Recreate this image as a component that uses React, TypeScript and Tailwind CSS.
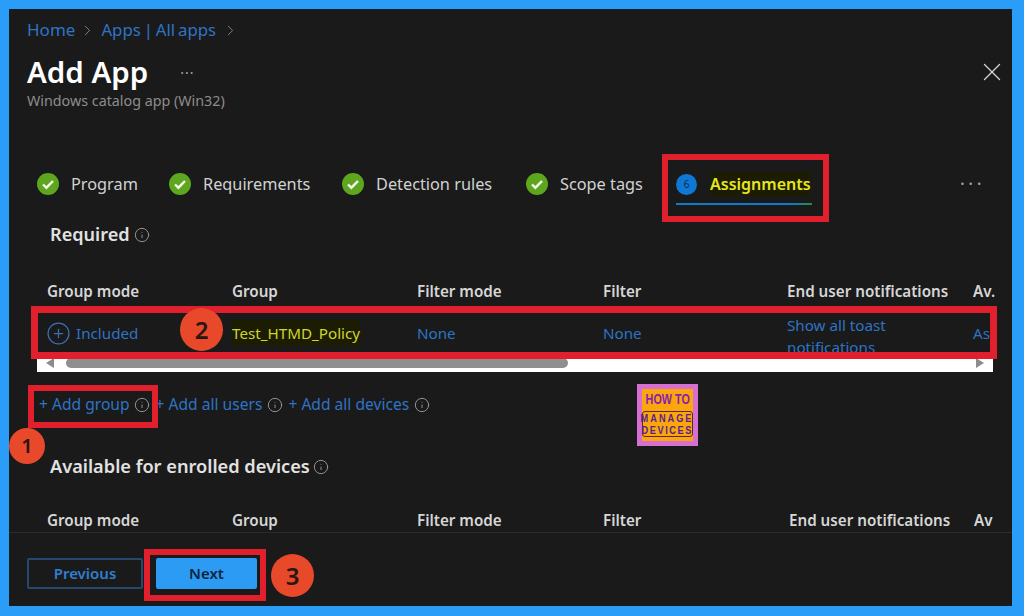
import { ChevronRight, CirclePlus, Info, X } from "lucide-react";

const FONT = "font-['Noto_Sans','Open_Sans',sans-serif]";

const doneTabs = [
  { label: "Program", width: "w-[66px]" },
  { label: "Requirements", width: "w-[107px]" },
  { label: "Detection rules", width: "w-[118px]" },
  { label: "Scope tags", width: "w-[84px]" },
];

function CheckBadge() {
  return (
    <svg viewBox="0 0 22 22" className="h-[22px] w-[22px] shrink-0">
      <circle cx="11" cy="11" r="11" fill="#5ea61e" />
      <path d="M6 11.5l3.4 3.2L16 8" fill="none" stroke="#f4f8ee" strokeWidth="2.4" />
    </svg>
  );
}

function InfoDot({ className = "" }: { className?: string }) {
  return <Info className={`h-[16px] w-[16px] shrink-0 text-[#9a9a9a] ${className}`} strokeWidth={1.4} />;
}

function Callout({ n, className }: { n: number; className: string }) {
  return (
    <div className={`absolute flex items-center justify-center rounded-full bg-[#e8492a] font-semibold text-[#2a1510] ${className}`}>
      {n}
    </div>
  );
}

function HeaderCells({ grid, last }: { grid: string; last: string }) {
  return (
    <div className={`grid h-[32px] shrink-0 items-center pl-[38px] text-[15.2px] font-semibold whitespace-nowrap text-[#d6d6d6] ${grid}`}>
      <span>Group mode</span>
      <span>Group</span>
      <span>Filter mode</span>
      <span>Filter</span>
      <span>End user notifications</span>
      <span>{last}</span>
    </div>
  );
}

export default function App() {
  return (
    <div className={`relative h-[616px] w-[1024px] overflow-hidden bg-[#2a9df8] pt-[9px] pr-[12px] pb-[10px] pl-[9px] ${FONT}`}>
      <div className="flex h-full flex-col bg-[#1a1a1a]">
        <div className="flex min-h-0 flex-1 flex-col overflow-hidden">
          <div className="mt-[10px] flex h-[22px] items-center pl-[18px] text-[17px] text-[#2f73c4]">
            <span>Home</span>
            <ChevronRight className="mr-[5px] ml-[4px] h-[17px] w-[17px] text-[#8a8a8a]" strokeWidth={1.3} />
            <span className="text-[16.8px] [word-spacing:-1.5px]">Apps | All apps</span>
            <ChevronRight className="ml-[6px] h-[17px] w-[17px] text-[#8a8a8a]" strokeWidth={1.3} />
          </div>

          <div className="mt-[11px] flex h-[40px] items-center pr-[5px] pl-[18px]">
            <h1 className="text-[29.5px] font-semibold text-white">Add App</h1>
            <span className="ml-[32px] text-[14px] tracking-[1px] text-[#a8a8a8]">···</span>
            <X className="ml-auto h-[30px] w-[30px] text-[#d0d0d0]" strokeWidth={1.1} />
          </div>
          <div className="flex h-[18px] items-center pl-[18px] text-[14.3px] text-[#8c8c8c]">Windows catalog app (Win32)</div>

          <div className="mt-[50px] flex h-[48px] shrink-0 items-center pl-[28px] text-[16.3px] whitespace-nowrap text-[#d2d2d2]">
            {doneTabs.map((t) => (
              <div key={t.label} className="mr-[32px] flex items-center gap-[12px]">
                <CheckBadge />
                <span className={t.width}>{t.label}</span>
              </div>
            ))}
            <div className="flex h-[45px] w-[136px] shrink-0 flex-col justify-end self-start">
              <div className="flex flex-1 items-center pt-[5px]">
                <div className="flex h-[21px] w-[21px] items-center justify-center rounded-full bg-[#0f78d4] text-[10px] text-[#0c2a4a]">6</div>
                <span className="ml-[13px] bg-[#1c1c02] text-[16px] font-semibold text-[#e6e622]">Assignments</span>
              </div>
              <div className="h-[2px] bg-gradient-to-r from-[#137ac8] from-[85%] to-[#2f8a2c]" />
            </div>
            <span className="mb-[1px] ml-auto pr-[27px] text-[18px] tracking-[3.5px] text-[#a8a8a8]">···</span>
          </div>

          <div className="mt-[16px] flex h-[22px] shrink-0 items-center gap-[4px] pl-[41px] text-[18.1px] font-semibold text-[#e2e2e2]">
            Required <InfoDot />
          </div>

          <div className="mt-[29px] mr-[19px] shrink-0">
            <HeaderCells grid="grid-cols-[185px_185px_186px_184px_186px_1fr]" last="Av." />
            <div className="grid h-[51px] grid-cols-[185px_185px_186px_184px_186px_1fr] items-center overflow-hidden pt-[1px] pl-[38px] text-[15.2px] text-[#2f73c4]">
              <div className="flex items-center gap-[5px]">
                <CirclePlus className="ml-[-1px] h-[25px] w-[25px] text-[#3a6fb4]" strokeWidth={1.2} />
                Included
              </div>
              <div>
                <span className="bg-[#1c1c02] py-[3px] text-[#cfd62c]">Test_HTMD_Policy</span>
              </div>
              <span>None</span>
              <span>None</span>
              <div className="mt-[6px] self-start leading-[22px]">
                Show all toast
                <br />
                notifications
              </div>
              <span>As</span>
            </div>
          </div>

          <div className="mr-[19px] ml-[28px] flex h-[14px] shrink-0 items-start bg-white">
            <div className="flex h-[10px] w-[29px] items-center pl-[9px]">
              <svg viewBox="0 0 8 10" className="h-[10px] w-[8px]"><path d="M8 0v10L0 5z" fill="#8c8c8c" /></svg>
            </div>
            <div className="h-[10px] w-[502px] rounded-l-[5px] rounded-r-[5px] bg-[#8f8f8f]" />
            <div className="ml-auto flex h-[10px] pr-[9px]">
              <svg viewBox="0 0 8 10" className="h-[10px] w-[8px]"><path d="M0 0v10l8-5z" fill="#8c8c8c" /></svg>
            </div>
          </div>

          <div className="mt-[21px] flex h-[24px] shrink-0 items-center pl-[30px] text-[15.6px] whitespace-nowrap text-[#2f73c4]">
            <span>+ Add group</span>
            <InfoDot className="ml-[4px]" />
            <span className="ml-[6px]">+ Add all users</span>
            <InfoDot className="ml-[5px]" />
            <span className="ml-[5px]">+ Add all devices</span>
            <InfoDot className="ml-[5px]" />
          </div>

          <div className="mt-[39px] flex h-[22px] shrink-0 items-center gap-[3px] pl-[41px] text-[18.2px] font-semibold text-[#e2e2e2]">
            Available for enrolled devices <InfoDot />
          </div>

          <div className="mt-[26px] mr-[19px] shrink-0">
            <HeaderCells grid="grid-cols-[185px_185px_186px_186px_185px_1fr]" last="Av" />
          </div>
        </div>

        <div className="flex h-[74px] shrink-0 items-start gap-[13px] border-t border-[#2b2b2b] pt-[25px] pl-[18px] text-[15px] font-semibold">
          <button className="h-[31px] w-[116px] rounded-[2px] border-2 border-[#25496e] text-[#2f7fd0]">Previous</button>
          <button className="h-[31px] w-[101px] rounded-[2px] bg-[#2b9bf4] text-[#10253c]">Next</button>
        </div>
      </div>

      <div className="absolute top-[154px] left-[662px] h-[68px] w-[167px] border-[6px] border-[#e0202c]" />
      <div className="absolute top-[306px] left-[31px] h-[53px] w-[966px] border-[7px] border-[#e0202c]" />
      <div className="absolute top-[385px] left-[28px] h-[43px] w-[130px] border-[6px] border-[#e0202c]" />
      <div className="absolute top-[549px] left-[144px] h-[52px] w-[122px] border-[6px] border-[#e0202c]" />

      <Callout n={1} className="top-[428px] left-[9px] h-[36px] w-[36px] text-[20px]" />
      <Callout n={2} className="top-[308px] left-[180px] h-[43px] w-[43px] text-[24px]" />
      <Callout n={3} className="top-[554px] left-[271px] h-[43px] w-[43px] text-[24px]" />

      <div className="absolute top-[384px] left-[637px] flex h-[62px] w-[61px] flex-col items-center border-[5px] border-[#d56fd0] bg-[#fba60c] font-['Liberation_Sans',sans-serif] font-bold whitespace-nowrap text-[#8a1fb0]">
        <span className="mt-[2px] h-[16px] scale-x-[0.72] text-[15px] leading-[16px]">HOW TO</span>
        <div className="mt-[4px] flex h-[26px] w-[51px] flex-col items-center justify-center rounded-[3px] border border-[#5c2a20] text-[11.5px] leading-[12px] text-[#5a1f90]">
          <span className="scale-x-[0.8] tracking-[2.5px]">MANAGE</span>
          <span className="scale-x-[0.8] tracking-[2px]">DEVICES</span>
        </div>
      </div>
    </div>
  );
}
